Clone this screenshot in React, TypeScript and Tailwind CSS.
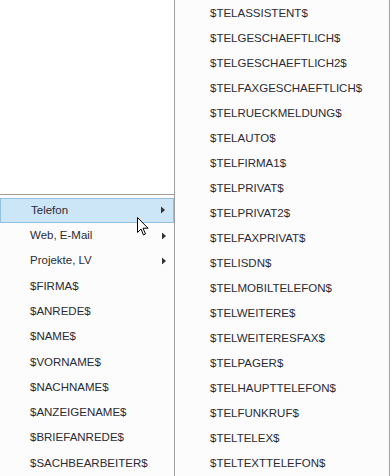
import React from 'react';

const leftItems: { label: string; sub?: boolean; active?: boolean }[] = [
  { label: 'Telefon', sub: true, active: true },
  { label: 'Web, E-Mail', sub: true },
  { label: 'Projekte, LV', sub: true },
  { label: '$FIRMA$' },
  { label: '$ANREDE$' },
  { label: '$NAME$' },
  { label: '$VORNAME$' },
  { label: '$NACHNAME$' },
  { label: '$ANZEIGENAME$' },
  { label: '$BRIEFANREDE$' },
  { label: '$SACHBEARBEITER$' },
];

const telItems = [
  '$TELASSISTENT$',
  '$TELGESCHAEFTLICH$',
  '$TELGESCHAEFTLICH2$',
  '$TELFAXGESCHAEFTLICH$',
  '$TELRUECKMELDUNG$',
  '$TELAUTO$',
  '$TELFIRMA1$',
  '$TELPRIVAT$',
  '$TELPRIVAT2$',
  '$TELFAXPRIVAT$',
  '$TELISDN$',
  '$TELMOBILTELEFON$',
  '$TELWEITERE$',
  '$TELWEITERESFAX$',
  '$TELPAGER$',
  '$TELHAUPTTELEFON$',
  '$TELFUNKRUF$',
  '$TELTELEX$',
  '$TELTEXTTELEFON$',
];

const Arrow = () => (
  <svg width="4" height="7" viewBox="0 0 4 7" className="absolute right-[8px] top-1/2 -translate-y-1/2">
    <path d="M0 0 L4 3.5 L0 7 Z" fill="#333" />
  </svg>
);

const Cursor = () => (
  <svg width="12" height="19" viewBox="0 0 12 19" className="absolute left-[137px] top-[217px]">
    <path d="M0.5 0.5 L0.5 15.5 L4 12 L6.5 18 L8.5 17 L6 11.2 L11 11.2 Z" fill="#fff" stroke="#000" strokeWidth="1" strokeLinejoin="miter" />
  </svg>
);

export default function App() {
  return (
    <div className="relative w-[390px] h-[476px] bg-white flex overflow-hidden text-[11.5px] text-[#2b2b35]" style={{ fontFamily: '"Liberation Sans", Arial, sans-serif' }}>
      {/* Hauptmenü */}
      <div className="w-[174px] flex flex-col">
        <div className="h-[198px]" />
        <div className="flex-1 bg-[#fcfcfc] border-t border-[#a0a0a0] pt-[3px]">
          {leftItems.map(item => (
            <div
              key={item.label}
              className={`relative h-[25.3px] flex items-center pl-[30px] ${item.active ? 'bg-[#cde6f7] border border-[#92c0e0] pl-[29px]' : ''}`}
            >
              {item.label}
              {item.sub && <Arrow />}
            </div>
          ))}
        </div>
      </div>

      {/* Untermenü Telefon */}
      <div className="w-[216px] bg-[#fcfcfc] border-l border-r border-[#a0a0a0] pt-[1px]">
        {telItems.map(t => (
          <div key={t} className="h-[25px] flex items-center pl-[35px]">
            {t}
          </div>
        ))}
      </div>

      <Cursor />
    </div>
  );
}
